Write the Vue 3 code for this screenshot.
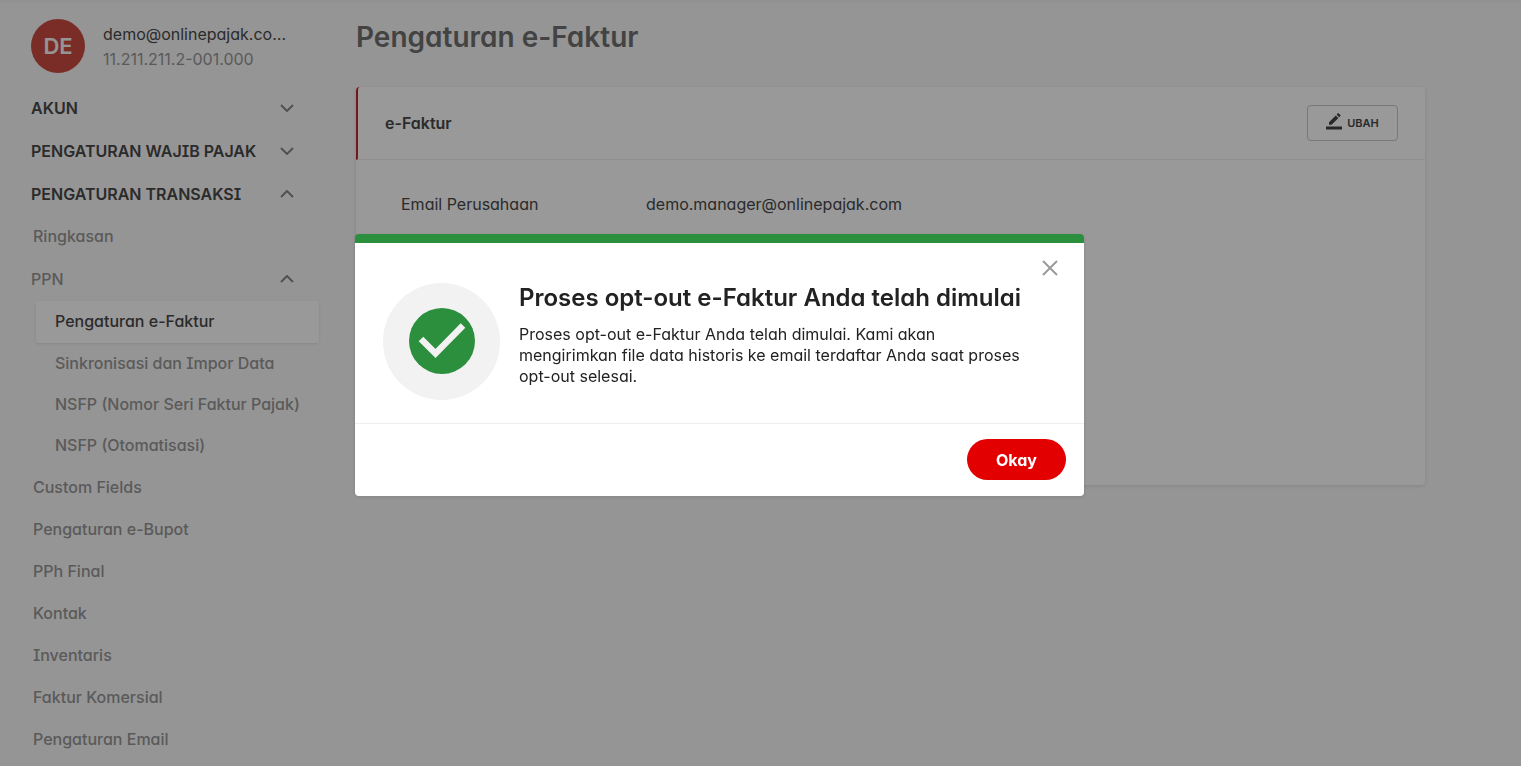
<template>
  <div class="page">
    <aside class="sidebar">
      <div class="profile">
        <div class="avatar">DE</div>
        <div class="profile-info">
          <div class="profile-mail">demo@onlinepajak.co…</div>
          <div class="profile-npwp">11.211.211.2-001.000</div>
        </div>
      </div>

      <nav class="nav">
        <button v-for="group in groups" :key="group.label" class="nav-group" type="button">
          <span>{{ group.label }}</span>
          <svg class="chevron" :class="{ open: group.open }" viewBox="0 0 14 8">
            <path d="M1 1l6 6 6-6" />
          </svg>
        </button>

        <a class="nav-item" href="#">Ringkasan</a>
        <button class="nav-group light" type="button">
          <span>PPN</span>
          <svg class="chevron open" viewBox="0 0 14 8">
            <path d="M1 1l6 6 6-6" />
          </svg>
        </button>

        <div class="sub-nav">
          <a
            v-for="item in ppnItems"
            :key="item"
            class="sub-item"
            :class="{ active: item === current }"
            href="#"
          >{{ item }}</a>
        </div>

        <a v-for="item in items" :key="item" class="nav-item" href="#">{{ item }}</a>
      </nav>
    </aside>

    <main class="main">
      <h1 class="page-title">Pengaturan e-Faktur</h1>
      <section class="card">
        <header class="card-header">
          <h2>e-Faktur</h2>
          <button class="edit-btn" type="button">
            <svg viewBox="0 0 16 17">
              <path d="M3 9.200 9.800 2.400 12.400 5 5.600 11.800H3z M10.600 1.600 12.200 0 14.800 2.600 13.200 4.200z M0 13.500H16V16.500H0z" />
            </svg>
            <span>UBAH</span>
          </button>
        </header>
        <dl class="card-body">
          <dt>Email Perusahaan</dt>
          <dd>demo.manager@onlinepajak.com</dd>
        </dl>
      </section>
    </main>

    <!-- dialog konfirmasi -->
    <div v-if="showDialog" class="overlay">
      <div class="dialog" role="dialog" aria-modal="true" aria-labelledby="dialog-title">
        <button class="close-btn" type="button" aria-label="Tutup" @click="closeDialog">
          <svg viewBox="0 0 16 16">
            <path d="M1 1l14 14M15 1L1 15" />
          </svg>
        </button>
        <div class="dialog-body">
          <div class="status">
            <svg viewBox="0 0 66 66">
              <circle cx="33" cy="33" r="33" fill="#2c8f3e" />
              <path d="M12 31l14.500 14.500 27.500-28" fill="none" stroke="#f2f2f2" stroke-width="6.500" />
            </svg>
          </div>
          <div class="dialog-text">
            <h3 id="dialog-title">Proses opt-out e-Faktur Anda telah dimulai</h3>
            <p>
              Proses opt-out e-Faktur Anda telah dimulai. Kami akan mengirimkan file data historis
              ke email terdaftar Anda saat proses opt-out selesai.
            </p>
          </div>
        </div>
        <div class="dialog-footer">
          <button class="ok-btn" type="button" @click="closeDialog">Okay</button>
        </div>
      </div>
    </div>
  </div>
</template>

<script setup>
import { ref } from 'vue';

const groups = [
  { label: 'AKUN', open: false },
  { label: 'PENGATURAN WAJIB PAJAK', open: false },
  { label: 'PENGATURAN TRANSAKSI', open: true }
];

const ppnItems = [
  'Pengaturan e-Faktur',
  'Sinkronisasi dan Impor Data',
  'NSFP (Nomor Seri Faktur Pajak)',
  'NSFP (Otomatisasi)'
];

const items = [
  'Custom Fields',
  'Pengaturan e-Bupot',
  'PPh Final',
  'Kontak',
  'Inventaris',
  'Faktur Komersial',
  'Pengaturan Email'
];

const current = ref('Pengaturan e-Faktur');
const showDialog = ref(true);

const closeDialog = () => {
  showDialog.value = false;
};
</script>

<style>
body {
  margin: 0;
  background: #f9f9f9;
}
</style>

<style scoped>
.page {
  display: flex;
  min-height: 100vh;
  box-sizing: border-box;
  font-family: Inter, "Open Sans", sans-serif;
  font-feature-settings: "cv11", "cv08";
  font-size: 16px;
  line-height: 20px;
  color: #484848;
  box-shadow: inset 0 6px 6px -6px rgba(0, 0, 0, 0.08);
}

button {
  font: inherit;
  font-feature-settings: inherit;
  color: inherit;
  background: none;
  border: none;
  padding: 0;
  cursor: pointer;
}

a {
  color: inherit;
  text-decoration: none;
}

.sidebar {
  flex: none;
  width: 288px;
  padding: 19px 37px 0 31px;
}

.profile {
  display: flex;
  align-items: center;
  gap: 18px;
  height: 54px;
  margin-bottom: 13px;
}

.avatar {
  flex: none;
  width: 54px;
  height: 54px;
  border-radius: 50%;
  background: #cb4c42;
  color: #f9f9f9;
  font-size: 22px;
  font-weight: 600;
  line-height: 54px;
  text-align: center;
}

.profile-info {
  padding-top: 2px;
  line-height: 25px;
  white-space: nowrap;
}

.profile-npwp {
  color: #969696;
}

.nav {
  display: flex;
  flex-direction: column;
}

.nav-group {
  display: flex;
  align-items: center;
  justify-content: space-between;
  height: 43px;
  padding-right: 25px;
  font-weight: 600;
  text-align: left;
  white-space: nowrap;
}

.nav-group.light {
  font-weight: 500;
  color: #969696;
}

.chevron {
  width: 14px;
  height: 8px;
  fill: none;
  stroke: #888;
  stroke-width: 2;
}

.chevron.open {
  transform: rotate(180deg);
}

.nav-item {
  padding: 11px 2px;
  font-weight: 500;
  color: #969696;
}

.sub-nav {
  display: flex;
  flex-direction: column;
  padding: 1px 0 0 5px;
}

.sub-item {
  height: 41px;
  padding-left: 19px;
  line-height: 41px;
  font-weight: 500;
  color: #969696;
  white-space: nowrap;
}

.sub-item.active {
  height: 42px;
  border-radius: 2px;
  background: #fff;
  box-shadow: 0 1px 3px rgba(0, 0, 0, 0.1);
  color: #484848;
}

.main {
  flex: 1;
  min-width: 0;
  padding: 19px 96px 0 0;
}

.page-title {
  margin: 0 0 32px;
  font-size: 28px;
  font-weight: 600;
  line-height: 36px;
  color: #717171;
}

.card {
  min-height: 398px;
  border-radius: 4px;
  background: #fff;
  box-shadow: 0 1px 4px rgba(0, 0, 0, 0.12);
}

.card-header {
  display: flex;
  align-items: center;
  justify-content: space-between;
  height: 72px;
  padding: 0 27px;
  border-left: 2px solid #c4262e;
  border-bottom: 1px solid #eee;
  border-top-left-radius: 4px;
}

.card-header h2 {
  margin: 0;
  font-size: 16px;
  font-weight: 600;
}

.edit-btn {
  display: flex;
  align-items: center;
  justify-content: center;
  gap: 5px;
  width: 91px;
  height: 36px;
  border: 1px solid #c8c8c8;
  border-radius: 4px;
  font-size: 11px;
  font-weight: 600;
}

.edit-btn svg {
  width: 16px;
  height: 17px;
  margin-bottom: 4px;
  fill: #444;
}

.card-body {
  display: grid;
  grid-template-columns: 245px 1fr;
  margin: 0;
  padding: 34px 45px;
}

.card-body dd {
  margin: 0;
}

.overlay {
  position: fixed;
  inset: 0;
  display: flex;
  align-items: center;
  justify-content: center;
  padding: 0 82px 36px 0;
  background: rgba(0, 0, 0, 0.4);
}

.dialog {
  position: relative;
  width: 729px;
  box-sizing: border-box;
  border-top: 9px solid #2c8f3e;
  border-radius: 4px;
  background: #fff;
  box-shadow: 0 1px 4px rgba(0, 0, 0, 0.12);
  color: #222;
}

.close-btn {
  position: absolute;
  top: 17px;
  right: 26px;
  width: 16px;
  height: 16px;
}

.close-btn svg {
  display: block;
  width: 16px;
  height: 16px;
  fill: none;
  stroke: #9b9b9b;
  stroke-width: 2;
}

.dialog-body {
  display: flex;
  gap: 19px;
  padding: 40px 48px 23px 28px;
  border-bottom: 1px solid #eee;
}

.status {
  display: flex;
  flex: none;
  align-items: center;
  justify-content: center;
  width: 117px;
  height: 117px;
  border-radius: 50%;
  background: #f2f2f2;
}

.status svg {
  width: 66px;
  height: 66px;
  margin-bottom: 2px;
}

.dialog-text h3 {
  margin: 0 0 12px;
  font-size: 24px;
  font-weight: 600;
  line-height: 29px;
  white-space: nowrap;
}

.dialog-text p {
  margin: 0;
  line-height: 21px;
}

.dialog-footer {
  display: flex;
  justify-content: flex-end;
  padding: 15px 18px 16px;
}

.ok-btn {
  width: 99px;
  height: 41px;
  border-radius: 21px;
  background: #e20000;
  color: #fff;
  font-weight: 700;
}
</style>
